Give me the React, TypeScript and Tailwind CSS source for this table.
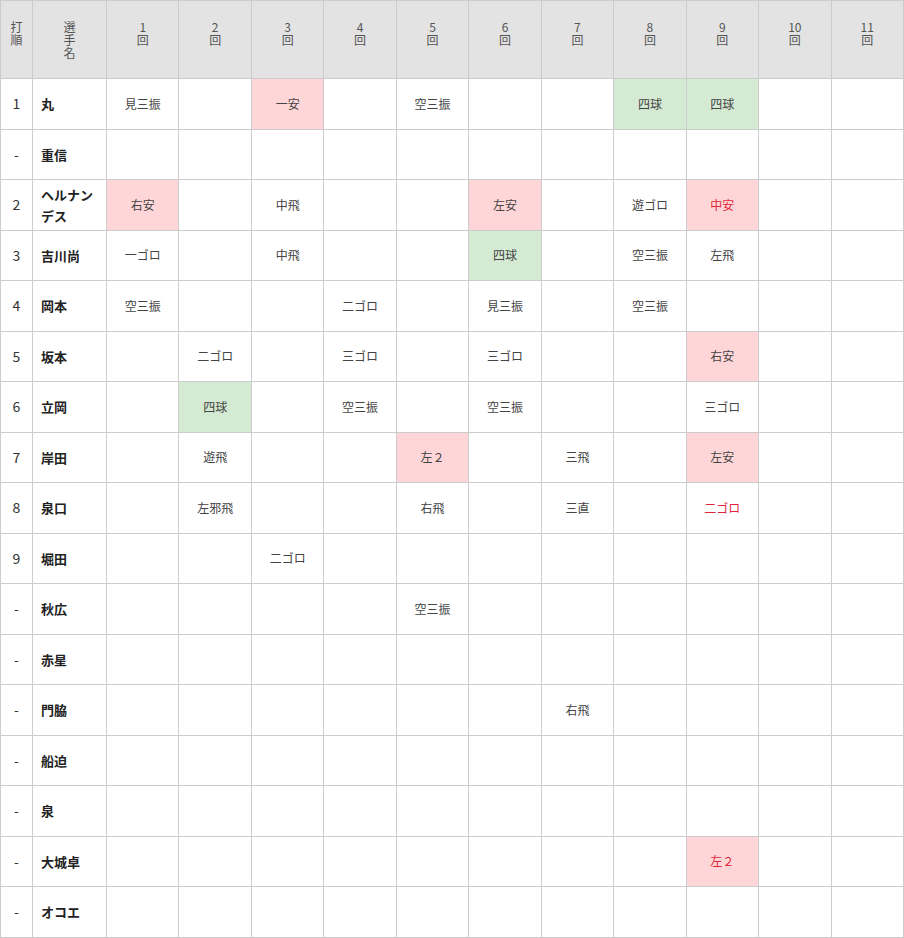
type Cell = { t: string; bg?: "hit" | "walk"; red?: boolean }

interface Row {
  order: string
  name: string
  cells: Record<number, Cell>
}

const rows: Row[] = [
  { order: "1", name: "丸", cells: { 1: { t: "見三振" }, 3: { t: "一安", bg: "hit" }, 5: { t: "空三振" }, 8: { t: "四球", bg: "walk" }, 9: { t: "四球", bg: "walk" } } },
  { order: "-", name: "重信", cells: {} },
  { order: "2", name: "ヘルナンデス", cells: { 1: { t: "右安", bg: "hit" }, 3: { t: "中飛" }, 6: { t: "左安", bg: "hit" }, 8: { t: "遊ゴロ" }, 9: { t: "中安", bg: "hit", red: true } } },
  { order: "3", name: "吉川尚", cells: { 1: { t: "一ゴロ" }, 3: { t: "中飛" }, 6: { t: "四球", bg: "walk" }, 8: { t: "空三振" }, 9: { t: "左飛" } } },
  { order: "4", name: "岡本", cells: { 1: { t: "空三振" }, 4: { t: "二ゴロ" }, 6: { t: "見三振" }, 8: { t: "空三振" } } },
  { order: "5", name: "坂本", cells: { 2: { t: "二ゴロ" }, 4: { t: "三ゴロ" }, 6: { t: "三ゴロ" }, 9: { t: "右安", bg: "hit" } } },
  { order: "6", name: "立岡", cells: { 2: { t: "四球", bg: "walk" }, 4: { t: "空三振" }, 6: { t: "空三振" }, 9: { t: "三ゴロ" } } },
  { order: "7", name: "岸田", cells: { 2: { t: "遊飛" }, 5: { t: "左２", bg: "hit" }, 7: { t: "三飛" }, 9: { t: "左安", bg: "hit" } } },
  { order: "8", name: "泉口", cells: { 2: { t: "左邪飛" }, 5: { t: "右飛" }, 7: { t: "三直" }, 9: { t: "二ゴロ", red: true } } },
  { order: "9", name: "堀田", cells: { 3: { t: "二ゴロ" } } },
  { order: "-", name: "秋広", cells: { 5: { t: "空三振" } } },
  { order: "-", name: "赤星", cells: {} },
  { order: "-", name: "門脇", cells: { 7: { t: "右飛" } } },
  { order: "-", name: "船迫", cells: {} },
  { order: "-", name: "泉", cells: {} },
  { order: "-", name: "大城卓", cells: { 9: { t: "左２", bg: "hit", red: true } } },
  { order: "-", name: "オコエ", cells: {} },
]

const innings = [1, 2, 3, 4, 5, 6, 7, 8, 9, 10, 11]

// header labels are written one character per line
function Stack({ chars }: { chars: string[] }) {
  return (
    <div className="flex flex-col items-center leading-[13px]">
      {chars.map((c, i) => (
        <span key={i}>{c}</span>
      ))}
    </div>
  )
}

export default function App() {
  return (
    <div className="w-[904px] bg-white" style={{ fontFamily: '"Noto Sans CJK JP", "Noto Sans", sans-serif' }}>
      <table className="w-[904px] table-fixed border-collapse">
        <colgroup>
          <col className="w-[32px]" />
          <col className="w-[74px]" />
          {innings.map((n) => (
            <col key={n} />
          ))}
        </colgroup>
        <thead>
          <tr className="h-[78px] bg-[#e3e3e3] text-[12px] text-[#555]">
            <th className="border border-[#cccccc] align-top pt-[19px] font-normal">
              <Stack chars={["打", "順"]} />
            </th>
            <th className="border border-[#cccccc] align-top pt-[19px] font-normal">
              <Stack chars={["選", "手", "名"]} />
            </th>
            {innings.map((n) => (
              <th key={n} className="border border-[#cccccc] align-top pt-[19px] font-normal">
                <Stack chars={[String(n), "回"]} />
              </th>
            ))}
          </tr>
        </thead>
        <tbody>
          {rows.map((r, ri) => (
            <tr key={ri} className="h-[50.5px]">
              <td className="border border-[#cccccc] text-center text-[14px] text-[#333]">{r.order}</td>
              <td className="border border-[#cccccc] pl-[8px] pr-[8px] text-[13px] font-bold leading-[21px] text-[#222]">
                {r.name}
              </td>
              {innings.map((n) => {
                const c = r.cells[n]
                const bg = c?.bg === "hit" ? "bg-[#ffd6d8]" : c?.bg === "walk" ? "bg-[#d5ead3]" : ""
                const color = c?.red ? "text-[#e0263a]" : "text-[#444]"
                return (
                  <td key={n} className={`border border-[#cccccc] text-center text-[12px] ${bg} ${color}`}>
                    {c?.t}
                  </td>
                )
              })}
            </tr>
          ))}
        </tbody>
      </table>
    </div>
  )
}
